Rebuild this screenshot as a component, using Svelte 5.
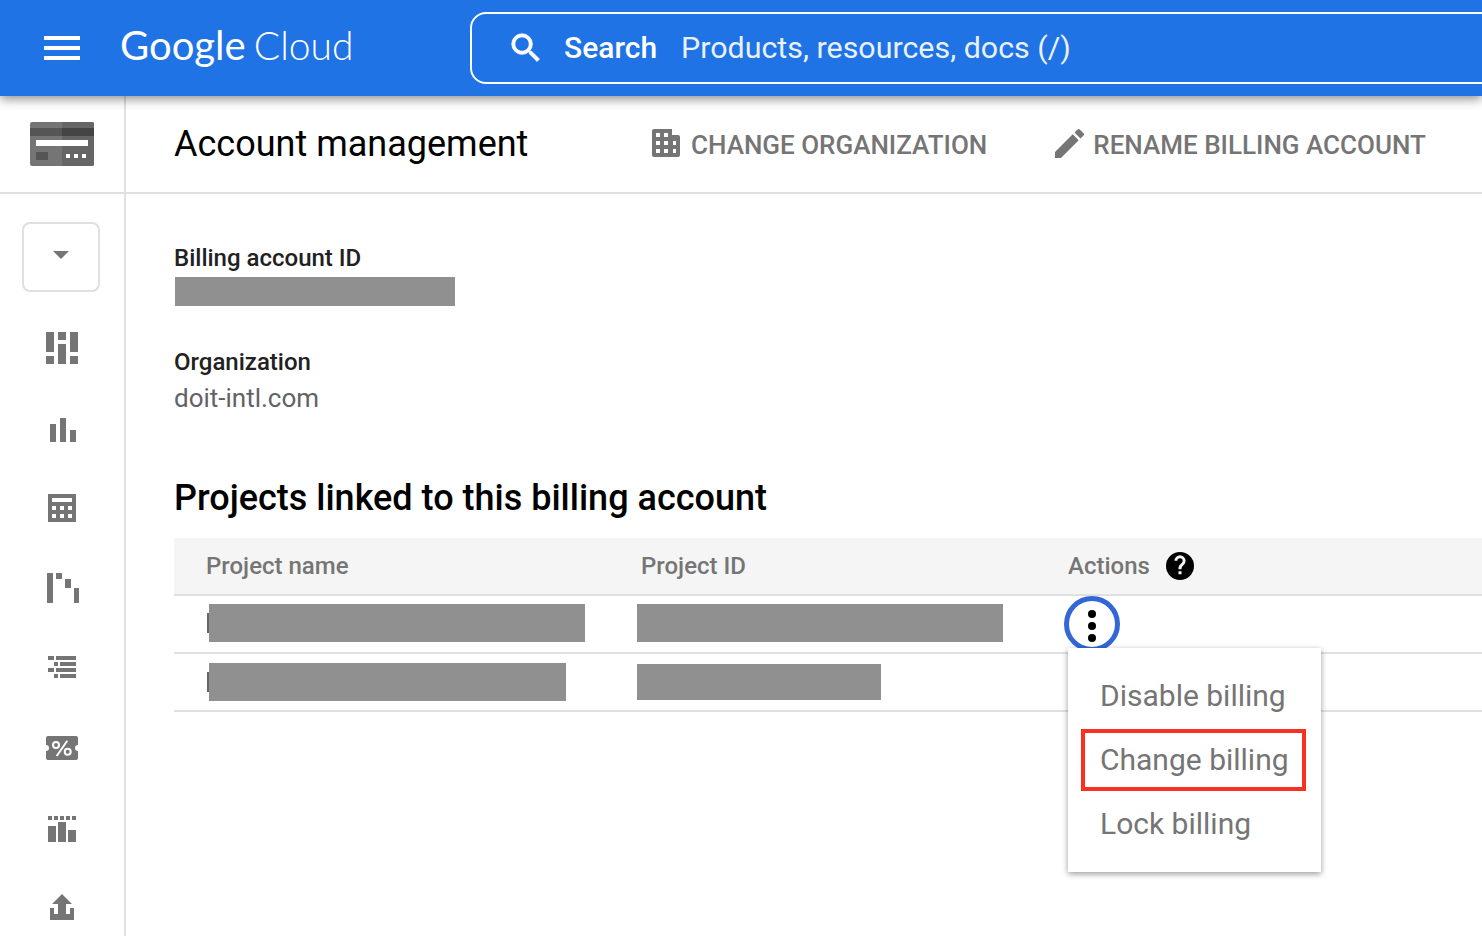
<script>
	const navIcons = [
		{ w: 32, h: 32, d: "M0 0h8v20H0zM12 0h8v8h-8zM24 0h8v20h-8zM12 12h8v20h-8zM0 24h8v8H0zM24 24h8v8h-8z" },
		{ w: 28, h: 28, d: "M2 10h6v18H2zM12 4h6v24h-6zM22 16h6v12h-6z" },
		{ w: 28, h: 28, d: "M0 0h28v28H0zM4 4v4h20V4zM4 12v4h4v-4zM12 12v4h4v-4zM20 12v4h4v-4zM4 20v4h4v-4zM12 20v4h4v-4zM20 20v4h4v-4z" },
		{ w: 34, h: 30, d: "M2 0h6v30H2zM11 0h6v6h-6zM20 6h6v9h-6zM29 15h6v15h-6z" },
		{ w: 28, h: 24, d: "M0 0h6v4H0zM8 0h20v4H8zM6 6h4v4H6zM12 6h16v4H12zM0 12h6v4H0zM8 12h20v4H8zM6 18h4v4H6zM12 18h16v4H12z" },
	];
	const lowerIcons = [
		{ w: 28, h: 28, d: "M0 2h4v4H0zM6 2h4v4H6zM12 2h4v4h-4zM18 2h4v4h-4zM24 2h4v4h-4zM0 12h8v16H0zM10 8h8v20h-8zM20 16h8v12h-8z" },
		{ w: 24, h: 28, d: "M12 0l10 10h-6v10H8V10H2zM0 14h4v6h16v-6h4v12H0z" },
	];
	const menuItems = ["Disable billing", "Change billing", "Lock billing"];
</script>

<div class="page">
	<header class="topbar">
		<button class="menu-btn" aria-label="Main menu"><span></span><span></span><span></span></button>
		<div class="logo"><span class="g">Google</span> <span class="c">Cloud</span></div>
		<div class="search">
			<svg width="38" height="38" viewBox="0 0 24 24" fill="#fff" stroke="#fff" stroke-width="0.5"><path d="M15.500 14h-.79l-.28-.27A6.470 6.470 0 0 0 16 9.500 6.500 6.500 0 1 0 9.500 16c1.610 0 3.090-.59 4.230-1.570l.27.28v.79l5 4.990L20.490 19l-4.990-5zm-6 0C7.010 14 5 11.990 5 9.500S7.010 5 9.500 5 14 7.010 14 9.500 11.990 14 9.500 14z"/></svg>
			<span class="search-label">Search</span>
			<span class="search-hint">Products, resources, docs (/)</span>
		</div>
	</header>

	<div class="body">
		<aside class="sidebar">
			<div class="card-slot">
				<svg width="64" height="44" viewBox="0 0 64 44">
					<rect width="64" height="44" rx="2" fill="#757575"/>
					<path d="M32 0h30a2 2 0 0 1 2 2v40a2 2 0 0 1-2 2H32z" fill="#666"/>
					<rect y="6" width="32" height="8" fill="#555"/>
					<rect x="32" y="6" width="32" height="8" fill="#444"/>
					<rect x="6" y="18" width="52" height="6" fill="#fff"/>
					<rect x="6" y="30" width="12" height="8" fill="#555"/>
					<path d="M36 32h4v4h-4zM44 32h4v4h-4zM52 32h4v4h-4z" fill="#fff"/>
				</svg>
			</div>
			<div class="side-list">
				<button class="picker" aria-label="Select"><i></i></button>
				<div class="nav">
					{#each navIcons as icon}
						<div class="nav-item">
							<svg width={icon.w} height={icon.h} viewBox="0 0 {icon.w} {icon.h}" fill="#757575" fill-rule="evenodd"><path d={icon.d}/></svg>
						</div>
					{/each}
					<div class="nav-item">
						<svg width="32" height="24" viewBox="0 0 32 24">
							<path fill="#757575" d="M2 0h28a2 2 0 0 1 2 2v7a3 3 0 0 0 0 6v7a2 2 0 0 1-2 2H2a2 2 0 0 1-2-2v-7a3 3 0 0 0 0-6V2a2 2 0 0 1 2-2z"/>
							<g fill="none" stroke="#fff" stroke-width="2">
								<circle cx="10" cy="9" r="3"/>
								<circle cx="21.700" cy="15.700" r="3"/>
								<path d="M21.300 4.700 10.700 20"/>
							</g>
						</svg>
					</div>
					{#each lowerIcons as icon}
						<div class="nav-item">
							<svg width={icon.w} height={icon.h} viewBox="0 0 {icon.w} {icon.h}" fill="#757575"><path d={icon.d}/></svg>
						</div>
					{/each}
				</div>
			</div>
		</aside>

		<main class="content">
			<div class="titlebar">
				<h1>Account management</h1>
				<div class="actions">
					<button class="action">
						<svg width="28" height="28" viewBox="0 0 28 28" fill="#757575" fill-rule="evenodd"><path d="M2 0h18v6h6a2 2 0 0 1 2 2v18a2 2 0 0 1-2 2H2a2 2 0 0 1-2-2V2a2 2 0 0 1 2-2zM4 4v4h4V4zM12 4v4h4V4zM4 12v4h4v-4zM12 12v4h4v-4zM4 20v4h4v-4zM12 20v4h4v-4zM21 12v4h3v-4zM21 20v4h3v-4z"/></svg>
						CHANGE ORGANIZATION
					</button>
					<button class="action pencil">
						<svg width="29" height="30" viewBox="0 0 29 30" fill="#757575"><path d="M0 24v6h6L23.700 12.300l-6-6zM28.500 7.500a1.600 1.600 0 0 0 0-2.300l-3.700-3.700a1.600 1.600 0 0 0-2.300 0l-3 3 6 6z"/></svg>
						RENAME BILLING ACCOUNT
					</button>
				</div>
			</div>

			<div class="details">
				<div class="field">
					<div class="label">Billing account ID</div>
					<div class="redact id-redact"></div>
				</div>
				<div class="field org">
					<div class="label">Organization</div>
					<div class="value">doit-intl.com</div>
				</div>
				<h2>Projects linked to this billing account</h2>

				<div class="table">
					<div class="row head">
						<div>Project name</div>
						<div>Project ID</div>
						<div class="col-actions">Actions
							<svg width="28" height="28" viewBox="0 0 24 24"><path d="M12 0a12 12 0 1 0 0 24 12 12 0 0 0 0-24zm1.300 19h-2.600v-2.500h2.600zm2.500-8.600-1.100 1.200c-.9.900-1.400 1.600-1.400 3.200h-2.600v-.6c0-1.300.5-2.500 1.400-3.400l1.500-1.600c.5-.4.700-1 .7-1.600a2.300 2.300 0 0 0-4.600 0H7.200a4.800 4.800 0 0 1 9.600 0c0 1-.4 2-1 2.800z" fill="#000"/></svg>
						</div>
					</div>
					<div class="row first">
						<div class="name-cell"><b class="stub"></b><div class="redact" style:width="376px"></div></div>
						<div class="id-cell"><div class="redact" style:width="366px"></div></div>
						<div class="btn-cell">
							<button class="kebab" aria-label="Actions"><i></i><i></i><i></i></button>
						</div>
					</div>
					<div class="row">
						<div class="name-cell"><b class="stub"></b><div class="redact" style:width="357px"></div></div>
						<div class="id-cell"><div class="redact short" style:width="244px"></div></div>
						<div></div>
					</div>

					<div class="popup">
						{#each menuItems as item}
							<div class="popup-item" class:marked={item === "Change billing"}>{item}</div>
						{/each}
					</div>
				</div>
			</div>
		</main>
	</div>
</div>

<style>
	:global(body) {
		margin: 0;
		overflow: hidden;
		background: #fff;
	}

	.page {
		width: 1482px;
		height: 936px;
		overflow: hidden;
		font-family: Roboto, "Liberation Sans", sans-serif;
		display: flex;
		flex-direction: column;
	}

	button {
		font: inherit;
		background: none;
		border: none;
		padding: 0;
	}

	.topbar {
		height: 96px;
		flex-shrink: 0;
		background: #1f73e5;
		display: flex;
		align-items: center;
		box-shadow: 0 3px 10px rgba(0, 0, 0, 0.45);
		position: relative;
		z-index: 2;
	}

	.menu-btn {
		margin-left: 44px;
		width: 36px;
		flex-shrink: 0;
		display: flex;
		flex-direction: column;
		gap: 6px;
	}

	.menu-btn span {
		display: block;
		height: 4px;
		background: #fff;
	}

	.logo {
		margin-left: 40px;
		width: 350px;
		flex-shrink: 0;
		font-family: Lato, sans-serif;
		font-size: 40px;
		color: #fff;
		white-space: nowrap;
		margin-top: -6px;
		word-spacing: -2px;
	}

	.logo .c {
		font-size: 39px;
		font-weight: 300;
	}

	.search {
		height: 68px;
		width: 1100px;
		flex-shrink: 0;
		border: 2px solid #fff;
		border-radius: 16px;
		display: flex;
		align-items: center;
		color: #fff;
		font-size: 30px;
		padding-left: 35px;
		box-sizing: content-box;
	}

	.search-label {
		margin: 0 0 2px 19px;
		font-weight: 500;
	}

	.search-hint {
		margin: 0 0 2px 24px;
		font-size: 30.4px;
		opacity: 0.9;
	}

	.body {
		flex: 1;
		display: flex;
		min-height: 0;
	}

	.sidebar {
		width: 124px;
		flex-shrink: 0;
		border-right: 2px solid #e0e0e0;
		display: flex;
		flex-direction: column;
	}

	.card-slot {
		height: 96px;
		flex-shrink: 0;
		border-bottom: 2px solid #e0e0e0;
		display: flex;
		align-items: center;
		justify-content: center;
	}

	.side-list {
		display: flex;
		flex-direction: column;
		align-items: center;
		padding-top: 28px;
	}

	.picker {
		width: 78px;
		height: 70px;
		margin-left: -2px;
		box-sizing: border-box;
		border: 2px solid #e0e0e0;
		border-radius: 8px;
		display: flex;
		align-items: center;
		justify-content: center;
	}

	.picker i {
		width: 0;
		height: 0;
		border-left: 8px solid transparent;
		border-right: 8px solid transparent;
		border-top: 8px solid #757575;
		margin-top: -4px;
	}

	.nav {
		margin-top: 16px;
		display: flex;
		flex-direction: column;
		align-items: center;
	}

	.nav-item {
		height: 80px;
		display: flex;
		align-items: center;
		justify-content: center;
	}

	.content {
		flex: 1;
		min-width: 0;
	}

	.titlebar {
		height: 96px;
		border-bottom: 2px solid #e0e0e0;
		display: flex;
		align-items: center;
		padding-left: 48px;
	}

	h1 {
		margin: 0;
		font-size: 36px;
		font-weight: 400;
		color: #000;
		width: 478px;
		white-space: nowrap;
	}

	.actions {
		display: flex;
		gap: 67px;
		padding-top: 2px;
	}

	.action {
		display: flex;
		align-items: center;
		gap: 11px;
		color: #757575;
		font-size: 26px;
		font-weight: 500;
		white-space: nowrap;
	}

	.action svg {
		margin-bottom: 4px;
	}

	.pencil svg {
		margin-left: 1px;
		margin-right: -2px;
	}

	.details {
		padding: 49px 0 0 48px;
	}

	.label {
		font-size: 24px;
		font-weight: 500;
		color: #212121;
		line-height: 31px;
	}

	.redact {
		background: #909090;
	}

	.id-redact {
		width: 280px;
		height: 29px;
		margin: 3px 0 0 1px;
	}

	.org {
		margin-top: 41px;
	}

	.value {
		font-size: 26px;
		color: #5f6368;
		line-height: 36px;
		margin-top: 2px;
	}

	h2 {
		margin: 60px 0 0;
		font-size: 36px;
		font-weight: 500;
		line-height: 44px;
		color: #000;
	}

	.table {
		margin-top: 18px;
		position: relative;
	}

	.row {
		display: grid;
		grid-template-columns: 463px 431px 1fr;
		height: 56px;
		border-bottom: 2px solid #e0e0e0;
		position: relative;
	}

	.row.head {
		background: #f5f5f5;
		align-items: center;
		color: #757575;
		font-size: 24px;
		font-weight: 500;
		padding-left: 32px;
		grid-template-columns: 435px 427px 1fr;
	}

	.col-actions {
		display: flex;
		align-items: center;
		gap: 16px;
	}

	.name-cell {
		display: flex;
		align-items: center;
		padding-left: 33px;
		height: 100%;
	}

	.stub {
		width: 2px;
		height: 20px;
		background: #666;
	}

	.name-cell .redact,
	.id-cell .redact {
		height: 38px;
	}

	.first .redact,
	.first .stub {
		margin-bottom: 2px;
	}

	.id-cell {
		display: flex;
		align-items: center;
		height: 100%;
	}

	.id-cell .short {
		height: 36px;
	}

	.btn-cell {
		position: relative;
	}

	.kebab {
		position: absolute;
		left: -4px;
		top: 0;
		width: 56px;
		height: 56px;
		box-sizing: border-box;
		border: 5px solid #3367d6;
		border-radius: 50%;
		padding-top: 4px;
		display: flex;
		flex-direction: column;
		align-items: center;
		justify-content: center;
		gap: 4px;
		background: #fff;
	}

	.kebab i {
		width: 8px;
		height: 8px;
		border-radius: 50%;
		background: #000;
	}

	.popup {
		position: absolute;
		left: 894px;
		top: 110px;
		width: 253px;
		height: 224px;
		box-sizing: border-box;
		padding: 15px 0;
		background: #fff;
		box-shadow: 0 2px 6px rgba(0, 0, 0, 0.4);
		z-index: 3;
	}

	.popup-item {
		height: 64px;
		display: flex;
		align-items: center;
		padding-left: 32px;
		font-size: 30px;
		color: #757575;
		position: relative;
	}

	.marked::after {
		content: "";
		position: absolute;
		left: 13px;
		top: 2px;
		width: 225px;
		height: 62px;
		border: 4px solid #f83120;
		box-sizing: border-box;
	}
</style>
